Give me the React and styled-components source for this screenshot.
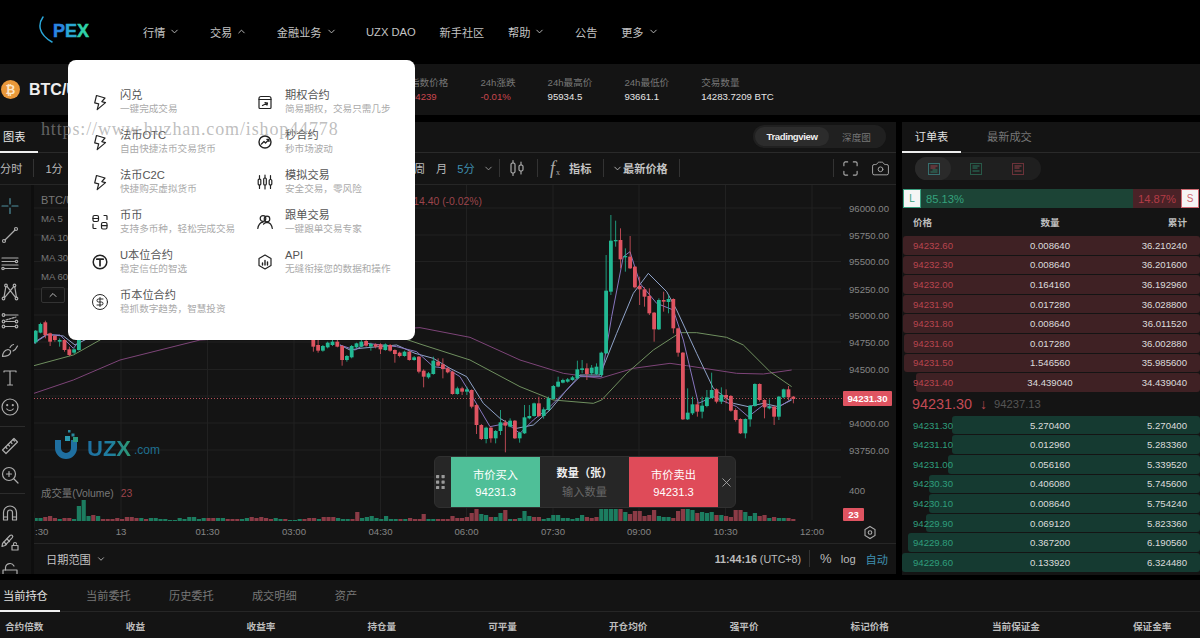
import React from "react";
import styled, { createGlobalStyle } from "styled-components";
import { ChevronDown, ChevronUp, ChevronLeft, Camera, X, CircleDollarSign } from "lucide-react";

const GlobalStyle = createGlobalStyle`
  html, body {
    margin: 0;
    padding: 0;
    background: #000;
  }
  body {
    font-family: "Liberation Sans", "Noto Sans CJK SC", sans-serif;
    color: #ccc;
  }
`;

/* chart data: values are read off the picture at 3x, so y = y0 + v / 3 */
const candleRuns = [
  {
    x0: 35.7,
    y0: 200,
    items: [
      [392, 427, 390, 432, "g"], [372, 398, 368, 400, "g"], [367, 405, 362, 415, "r"], [400, 425, 398, 438, "r"],
      [408, 420, 405, 425, "r"], [420, 425, 415, 440, "g"], [420, 450, 418, 455, "r"], [448, 465, 440, 468, "r"],
      [448, 458, 445, 462, "g"], [418, 450, 415, 452, "g"],
    ],
  },
  {
    x0: 313.3,
    y0: 330,
    items: [
      [30, 50, 25, 65, "r"], [45, 62, 30, 68, "r"], [48, 62, 45, 65, "g"], [38, 52, 35, 55, "g"], [35, 45, 30, 48, "g"],
      [35, 50, 28, 52, "r"], [48, 90, 45, 107, "r"], [78, 90, 75, 95, "g"], [48, 82, 45, 85, "g"], [40, 52, 38, 55, "g"],
      [35, 50, 30, 52, "g"], [33, 47, 30, 50, "r"], [42, 50, 38, 62, "g"], [43, 50, 40, 55, "r"], [43, 58, 40, 72, "r"],
      [43, 60, 40, 62, "g"], [45, 62, 42, 65, "r"], [60, 72, 58, 98, "r"], [68, 78, 65, 82, "r"], [65, 78, 62, 80, "g"],
      [65, 90, 62, 92, "r"], [82, 90, 78, 92, "g"], [80, 125, 78, 130, "r"], [122, 140, 118, 172, "r"], [130, 142, 126, 146, "g"],
      [92, 132, 80, 134, "g"], [95, 107, 85, 110, "r"], [103, 117, 85, 145, "r"], [115, 127, 112, 130, "r"], [125, 192, 122, 194, "r"],
      [175, 192, 170, 194, "g"], [175, 185, 170, 195, "r"], [178, 185, 170, 195, "g"], [180, 230, 178, 235, "r"], [225, 285, 222, 312, "r"],
      [285, 327, 282, 330, "r"], [293, 327, 290, 340, "g"], [293, 325, 290, 338, "r"], [303, 325, 300, 340, "g"], [277, 303, 240, 315, "g"],
      [277, 287, 270, 367, "r"], [272, 290, 265, 292, "g"], [272, 325, 270, 327, "r"], [308, 325, 305, 338, "g"], [262, 310, 225, 312, "g"],
      [258, 265, 225, 268, "g"], [220, 258, 218, 260, "g"], [220, 258, 200, 262, "r"], [238, 258, 232, 266, "g"], [205, 240, 200, 242, "g"],
      [168, 207, 165, 209, "g"], [155, 170, 140, 172, "g"], [150, 158, 146, 160, "g"], [148, 155, 144, 158, "g"], [142, 150, 138, 152, "g"],
      [118, 145, 92, 148, "g"], [115, 120, 90, 130, "g"], [115, 132, 100, 150, "r"], [113, 130, 105, 135, "g"], [110, 132, 100, 135, "g"],
    ],
  },
  {
    x0: 601.3,
    y0: 200,
    items: [
      [458, 525, 455, 530, "g"], [272, 460, 165, 462, "g"], [122, 275, 45, 285, "g"], [120, 124, 62, 140, "g"], [120, 178, 85, 205, "r"],
      [168, 172, 145, 215, "g"], [170, 205, 108, 207, "r"], [200, 262, 198, 265, "r"], [258, 268, 230, 315, "r"], [268, 290, 262, 320, "r"],
      [288, 340, 265, 345, "r"], [338, 388, 336, 425, "r"], [300, 388, 295, 390, "g"], [300, 305, 275, 335, "r"], [297, 306, 285, 340, "g"],
      [297, 385, 295, 400, "r"], [385, 458, 383, 470, "r"], [458, 658, 456, 660, "r"], [638, 658, 565, 660, "g"], [613, 640, 590, 645, "g"],
      [613, 635, 605, 650, "r"], [617, 635, 590, 655, "g"], [592, 618, 570, 622, "g"], [570, 594, 518, 595, "g"], [568, 605, 565, 610, "r"],
      [585, 605, 562, 612, "g"], [585, 593, 568, 610, "r"], [588, 632, 585, 635, "r"], [630, 660, 625, 665, "r"], [657, 700, 655, 702, "r"],
      [657, 700, 655, 715, "g"], [617, 658, 615, 680, "g"], [552, 618, 550, 620, "g"], [552, 600, 550, 605, "r"], [600, 622, 598, 655, "r"],
      [620, 625, 598, 628, "g"], [620, 650, 618, 675, "r"], [590, 650, 588, 660, "g"], [568, 592, 566, 595, "g"], [568, 592, 558, 600, "r"],
      [590, 597, 588, 610, "r"],
    ],
  },
];

const maLines = [
  {
    color: "#7d4478",
    segments: [
      [
        [0, 200, [[102, 580], [220, 540], [360, 480], [600, 420]]],
        [420, 200, [[0, 383], [150, 412], [300, 480], [430, 520], [540, 535], [640, 505], [750, 490], [800, 497], [950, 520], [1030, 522], [1115, 510]]],
      ],
    ],
  },
  {
    color: "#6f8f5f",
    segments: [
      [
        [0, 200, [[102, 497], [220, 465], [300, 420], [600, 200]]],
        [420, 200, [[-50, 415], [0, 432], [150, 480], [300, 560], [400, 600], [520, 610], [545, 600], [620, 520], [700, 450], [780, 398], [830, 398], [920, 412], [970, 435], [1050, 515], [1115, 560]]],
      ],
    ],
  },
  {
    color: "#8fa3c9",
    segments: [
      [[0, 200, [[102, 428], [140, 403], [190, 408], [225, 435], [260, 417]]]],
      [
        [300, 330, [[120, 45], [150, 60], [180, 55], [290, 45], [345, 70], [400, 85], [450, 115], [500, 140], [550, 220], [600, 265], [650, 295], [700, 285], [750, 240], [800, 180], [840, 135]]],
        [420, 200, [[540, 525], [590, 400], [640, 280], [685, 220], [740, 275], [770, 330], [830, 460], [880, 565], [940, 610], [985, 620], [1030, 610], [1075, 620], [1115, 600]]],
      ],
    ],
  },
  {
    color: "#8675bd",
    segments: [
      [[0, 200, [[102, 430], [140, 405], [180, 405], [220, 445], [240, 420]]]],
      [
        [300, 330, [[120, 45], [165, 60], [200, 40], [290, 50], [350, 65], [400, 110], [440, 115], [480, 140], [520, 205], [570, 290], [620, 280], [660, 310], [700, 270], [750, 230], [840, 140]]],
        [420, 200, [[545, 530], [575, 350], [610, 170], [630, 155], [660, 250], [710, 310], [760, 330], [790, 420], [835, 610], [880, 590], [950, 620], [985, 650], [1030, 615], [1070, 625], [1115, 597]]],
      ],
    ],
  },
];

const volumesLeft = [
  3, 3, -4, -5, -3, 2, -3, -3, 2, 15, 21, 5, -6, 5, -2, -2, -2, -3, -2, -4, -4, -3, 3, -2, 3, 3, 2, 2, 1, 1, 3, 2, 4, 4, 2, 3, -3, -3, 3, 3,
  -2, -2, -2, 2, 3, -4, -3, -4, -3, -2, 3, 2, -2, 1, 1, 2, -2, -3, -3, 2, -4, -4, -4, 3, 2, 2, -2, -9, 3, 4, 5, 3, 2, 5, 2, 2, -2, 2, -3, -2, -2,
];
const volumesRight = [
  -7, 2, 2, -2, -2, -2, -5, -3, -3, -4, -8, -12, 7, 6, -4, 4, 8, -11, 2, -2, 3, 10, 5, -4, -4, 2, 3, 6, 6, 3, 3, 2, 3, 6, -4, -3, -4, 12, 12, 12, 12,
  -12, 9, -7, -10, -10, -5, -6, -11, 5, 4, 4, -3, -10, -12, 12, 11, -8, 9, 8, 9, -6, 6, -5, -4, -11, -11, 9, 5, 8, -5, -6, 3, -4, 3, 3, -3, -2,
];

const priceLabels = [
  ["96000.00", 208], ["95750.00", 235], ["95500.00", 261.5], ["95250.00", 289], ["95000.00", 315],
  ["94750.00", 342], ["94500.00", 369.5], ["94000.00", 423], ["93750.00", 450], ["400", 490],
];
const gridY = [208, 235, 261.5, 289, 315, 342, 369.5, 396, 423, 450, 477];
const timeLabels = [
  ["13", 121], ["01:30", 207.5], ["03:00", 294], ["04:30", 380.5],
  ["06:00", 466.5], ["07:30", 553], ["09:00", 639], ["10:30", 725.5], ["12:00", 812],
];

const asks = [
  ["94232.60", "0.008640", "36.210240", 297],
  ["94232.30", "0.008640", "36.201600", 297],
  ["94232.00", "0.164160", "36.192960", 297],
  ["94231.90", "0.017280", "36.028800", 297],
  ["94231.80", "0.008640", "36.011520", 297],
  ["94231.60", "0.017280", "36.002880", 296],
  ["94231.50", "1.546560", "35.985600", 296],
  ["94231.40", "34.439040", "34.439040", 284],
];
const bids = [
  ["94231.30", "5.270400", "5.270400", 248],
  ["94231.10", "0.012960", "5.283360", 248],
  ["94231.00", "0.056160", "5.339520", 252],
  ["94230.30", "0.406080", "5.745600", 271],
  ["94230.10", "0.008640", "5.754240", 271],
  ["94229.90", "0.069120", "5.823360", 274],
  ["94229.80", "0.367200", "6.190560", 292],
  ["94229.60", "0.133920", "6.324480", 298],
];

const toPoints = (parts) =>
  parts
    .flatMap(([x0, y0, pts]) => pts.map(([x, y]) => `${x0 + x / 3},${y0 + y / 3}`))
    .join(" ");

const lineIcon = (children, box = 18) => ({ size = 18 }) => (
  <svg width={size} height={size} viewBox={`0 0 ${box} ${box}`} fill="none" stroke="currentColor" strokeWidth="1.2" strokeLinecap="round" strokeLinejoin="round">
    {children}
  </svg>
);

/* menu icons */
const BoltIcon = lineIcon(<path d="M5.500 2.500l8.500 2.500-3.200 3.600 3.700 1-8.300 7 1.500-5.700-4-1.100z" />);
const OptionIcon = lineIcon(
  <>
    <path d="M3 5.500c0-1 .6-2 2-2h8c1.400 0 2 1 2 2v9c0 .6-.4 1-1 1H4c-.6 0-1-.4-1-1z" />
    <path d="M3 6.500h12M6.500 12.500l5-2.500M9 9.600l2.500.4-.5 2.200" />
  </>
);
const SecondIcon = lineIcon(
  <>
    <circle cx="9" cy="9" r="6" strokeWidth="1.4" />
    <path d="M5.500 11l2.500-2.500 1.500 1.500L13 6.500M10.800 6.300H13v2.200" />
  </>
);
const SimIcon = lineIcon(
  <>
    <path d="M3.500 2.500V6M3.500 12v3.500M9 2v3M9 12v4M14.500 2.500v4M14.500 12v3.500" />
    <rect x="2.200" y="6" width="2.600" height="6" rx="1" />
    <rect x="7.700" y="5" width="2.600" height="7" rx="1" />
    <rect x="13.200" y="6.500" width="2.600" height="5.500" rx="1" />
  </>
);
const SpotIcon = lineIcon(
  <>
    <rect x="2" y="2.500" width="5.500" height="6" rx="1.500" />
    <path d="M2 5.500h5.500M16 6.500V3.500a1 1 0 0 0-1-1h-2M2 11v3.500a1 1 0 0 0 1 1h2" />
    <rect x="10.500" y="9.500" width="5.500" height="6.500" rx="1.500" />
    <path d="M10.500 12.700h5.500" />
  </>
);
const CopyIcon = lineIcon(
  <>
    <circle cx="7" cy="5.500" r="2.800" />
    <circle cx="11" cy="6" r="2.800" />
    <path d="M1.800 15.500c.6-3.500 2.400-6 5.200-6.300M16.300 15.500c-.5-3.300-2.200-6-5.300-6.200-1.600.1-2.700.8-3.500 1.900" />
  </>
);
const CoinTIcon = lineIcon(
  <>
    <circle cx="9" cy="9" r="6.800" strokeWidth="1.5" />
    <path d="M5.800 6.200h6.400M9 6.200v6.500" strokeWidth="1.700" />
  </>
);
const ApiIcon = lineIcon(
  <>
    <path d="M9 2l6 3.400v7.200L9 16l-6-3.400V5.400z" />
    <path d="M6.500 12V10M9 12V7.500M11.500 12V9" strokeWidth="1.400" />
  </>
);

/* toolbar icons */
const CrossTool = lineIcon(<path d="M9 1.500v5.500M9 11v5.500M1 9h6M11 9h6" />);
const LineTool = lineIcon(
  <>
    <circle cx="3" cy="15" r="1.500" />
    <circle cx="15" cy="3" r="1.500" />
    <path d="M4 14L14 4" />
  </>
);
const LinesTool = lineIcon(
  <>
    <path d="M1 3h16M1 6.500h13M1 10h16M3.500 13.500H17" />
    <circle cx="15.500" cy="6.500" r="1.200" />
    <circle cx="2" cy="13.500" r="1.200" />
  </>
);
const WebTool = lineIcon(
  <>
    <circle cx="5" cy="2.500" r="1.300" />
    <circle cx="13.500" cy="2.500" r="1.300" />
    <circle cx="2.500" cy="15.500" r="1.300" />
    <circle cx="15.500" cy="15.500" r="1.300" />
    <path d="M3 14.300L4.800 3.800M6 3.300l8.700 11.300M12.800 3.500L3.600 14.700M13.800 3.800l1.600 10.400" />
  </>
);
const ForkTool = lineIcon(
  <>
    <circle cx="2.500" cy="3" r="1.300" />
    <circle cx="2.500" cy="9.500" r="1.300" />
    <circle cx="2.500" cy="14.500" r="1.300" />
    <circle cx="15.500" cy="9.500" r="1.300" />
    <circle cx="15.500" cy="14.500" r="1.300" />
    <path d="M4 3h13M4 9.500h10M4 14.500h10" />
    <path d="M5 8l10-3" strokeDasharray="2 1.200" />
  </>
);
const BrushTool = lineIcon(
  <>
    <path d="M1.500 15.500c.3-3 2-6.500 5.500-7 2 .2 3 1.500 2.500 3.300-.8 2.600-4.200 3.700-8 3.700z" />
    <path d="M9 6.500c.8-1.700 2-2.800 3.500-3M12 10c1.800-.8 3.500-2.800 4.500-5" />
  </>
);
const TextTool = lineIcon(<path d="M3 3V2h12v1M9 2v14M6.500 16h5" />);
const SmileTool = lineIcon(
  <>
    <circle cx="9" cy="9" r="8" />
    <circle cx="6.200" cy="7.200" r=".5" />
    <circle cx="11.800" cy="7.200" r=".5" />
    <path d="M5.800 11c1.600 2 4.800 2 6.400 0" />
  </>
);
const RulerTool = lineIcon(
  <>
    <path d="M1.500 13l11.500-11.500 3.500 3.500L5 16.500z" />
    <path d="M4.500 10l1.500 1.500M7 7.500l1.500 1.500M9.500 5l1.500 1.500M12 2.500l1.500 1.500" />
  </>
);
const ZoomTool = lineIcon(
  <>
    <circle cx="8" cy="8" r="6.500" />
    <path d="M13 13l4 4M8 5.500v5M5.500 8h5" />
  </>
);
const MagnetTool = lineIcon(
  <>
    <path d="M2.500 16V8.500a6.500 6.500 0 0 1 13 0V16h-4V8.500a2.500 2.500 0 0 0-5 0V16z" />
    <path d="M2.500 13h4M11.500 13h4" />
  </>
);
const PencilLockTool = lineIcon(
  <>
    <path d="M1.500 10.500L9 2.500c.8-.7 1.700-.7 2.300 0 .6.600.6 1.500 0 2.200L4 12.500l-3 1z" />
    <path d="M3 9l2.500 2.500M6 6l2.500 2.500" />
    <rect x="11" y="12.500" width="6" height="4.500" />
    <path d="M12.500 12.500v-1.500a1.500 1.500 0 0 1 3 0" />
  </>
);
const LockTool = lineIcon(
  <>
    <rect x="2" y="8" width="14" height="9" />
    <path d="M4.500 8V5.500a4.500 4.500 0 0 1 8.500-1.500" />
  </>
);
const CandleTool = lineIcon(
  <>
    <rect x="3" y="4" width="4" height="10" rx="1.500" />
    <path d="M5 1.500V4M5 14v2.500M13 3v3M13 12v3" />
    <rect x="11" y="6" width="4" height="6" rx="1.500" />
  </>
);
const FullTool = lineIcon(<path d="M2 6V3.500C2 2.700 2.700 2 3.500 2H6M12 2h2.500c.8 0 1.500.7 1.500 1.500V6M16 12v2.500c0 .8-.7 1.500-1.500 1.500H12M6 16H3.500C2.700 16 2 15.300 2 14.500V12" />);

const GripDots = () => (
  <svg width="9" height="14" viewBox="0 0 9 14" fill="#9a9a9a">
    {[0, 5.500, 11].flatMap((y) =>
      [0, 5.500].map((x) => <rect key={`${x}-${y}`} x={x} y={y} width="3.200" height="3.200" rx=".6" />)
    )}
  </svg>
);

const BookIcon = ({ $red, $green }) => (
  <svg width="12" height="12" viewBox="0 0 12 12" fill="none" strokeWidth="1" opacity=".72">
    <rect x=".5" y=".5" width="11" height="11" stroke={$green && $red ? "#3d8a8a" : $green ? "#2c7058" : "#8a3a44"} />
    {$red && <path d="M2.500 3h7M2.500 5h5" stroke="#c0505a" />}
    {$green && <path d={$red ? "M4.500 7h5M2.500 9h7" : "M2.500 3h7M2.500 5h5M2.500 8h7"} stroke="#2f9a78" />}
    {!$green && <path d="M2.500 8h7" stroke="#c0505a" />}
  </svg>
);

const navItems = [
  { label: "行情", chevron: "down" },
  { label: "交易", chevron: "up" },
  { label: "金融业务", chevron: "down" },
  { label: "UZX DAO" },
  { label: "新手社区" },
  { label: "帮助", chevron: "down" },
  { label: "公告" },
  { label: "更多", chevron: "down" },
];

const menuItems = [
  { Icon: BoltIcon, title: "闪兑", sub: "一键完成交易" },
  { Icon: OptionIcon, title: "期权合约", sub: "简易期权，交易只需几步" },
  { Icon: BoltIcon, title: "法币OTC", sub: "自由快捷法币交易货币" },
  { Icon: SecondIcon, title: "秒合约", sub: "秒市场波动" },
  { Icon: BoltIcon, title: "法币C2C", sub: "快捷购买虚拟货币" },
  { Icon: SimIcon, title: "模拟交易", sub: "安全交易，零风险" },
  { Icon: SpotIcon, title: "币币", sub: "支持多币种，轻松完成交易" },
  { Icon: CopyIcon, title: "跟单交易", sub: "一键跟单交易专家" },
  { Icon: CoinTIcon, title: "U本位合约", sub: "稳定信任的智选" },
  { Icon: ApiIcon, title: "API", sub: "无缝衔接您的数据和操作" },
  { Icon: CircleDollarSign, title: "币本位合约", sub: "稳抓数字趋势，智慧投资" },
];

const metrics = [
  { label: "指数价格", value: "94239", red: true },
  { label: "24h涨跌", value: "-0.01%", red: true },
  { label: "24h最高价", value: "95934.5" },
  { label: "24h最低价", value: "93661.1" },
  { label: "交易数量", value: "14283.7209 BTC" },
];

const toolGroups = [
  [CrossTool, LineTool, LinesTool, WebTool, ForkTool, BrushTool, TextTool, SmileTool],
  [RulerTool, ZoomTool],
  [MagnetTool, PencilLockTool, LockTool],
];

const positionColumns = ["合约倍数", "收益", "收益率", "持仓量", "可平量", "开仓均价", "强平价", "标记价格", "当前保证金", "保证金率"];

const CandleChart = () => (
  <ChartSvg viewBox="34 185 862 358" width="862" height="358">
    {gridY.map((y) => (
      <line key={y} x1="34" x2="841" y1={y} y2={y} stroke="#212121" />
    ))}
    {timeLabels.map(([, x]) => (
      <line key={x} x1={x} x2={x} y1="185" y2="520" stroke="#212121" />
    ))}
    <line x1="34" x2="843" y1="398.500" y2="398.500" stroke="#b8505a" strokeDasharray="1 2" />
    {maLines.flatMap((ma) =>
      ma.segments.map((parts, i) => (
        <polyline key={ma.color + i} points={toPoints(parts)} fill="none" stroke={ma.color} strokeWidth="1" strokeLinejoin="round" />
      ))
    )}
    {candleRuns.flatMap((run) =>
      run.items.map(([top, bottom, high, low, tone], i) => {
        const x = run.x0 + i * 4.8;
        const fill = tone === "g" ? "#22b893" : "#df5461";
        return (
          <g key={`${run.x0}-${i}`} fill={fill}>
            <rect x={x - 0.4} width="0.8" y={run.y0 + high / 3} height={(low - high) / 3} />
            <rect x={x - 1.900} width="3.800" y={run.y0 + top / 3} height={Math.max((bottom - top) / 3, 1)} />
          </g>
        );
      })
    )}
    {[...volumesLeft.map((v, i) => [v, 35.7 + i * 4.8]), ...volumesRight.map((v, i) => [v, 423.7 + i * 4.8])].map(([v, x]) => (
      <rect key={x} x={x - 2.100} width="4.200" y={521 - Math.abs(v)} height={Math.abs(v)} fill={v > 0 ? "#1c7d60" : "#8b3b46"} />
    ))}
    {priceLabels.map(([text, y]) => (
      <AxisText key={text} x="849" y={y + 3.500}>{text}</AxisText>
    ))}
    <AxisText x="35" y="534.500">:30</AxisText>
    {timeLabels.map(([text, x]) => (
      <AxisText key={x} x={x} y="534.500" textAnchor="middle">{text}</AxisText>
    ))}
    <rect x="843" y="391" width="49" height="15" fill="#df5461" rx="1" />
    <TagText x="867.500" y="402" textAnchor="middle">94231.30</TagText>
    <rect x="843" y="508" width="21" height="13" fill="#df5461" rx="1" />
    <TagText x="853.500" y="518" textAnchor="middle">23</TagText>
    <g fill="none" stroke="#aaa" strokeWidth="1.100">
      <path d="M870 526.500l5 3v6l-5 3-5-3v-6z" />
      <circle cx="870" cy="532.500" r="1.800" />
    </g>
  </ChartSvg>
);

const UzxMark = () => (
  <svg width="27" height="32" viewBox="0 0 27 32">
    <path d="M2 11v8a11 11 0 0 0 22 0v-8h-6v8a5 5 0 0 1-10 0v-8z" fill="#1f6fa0" />
    <rect x="15" y="1" width="2.500" height="2.500" fill="#2a8aa0" />
    <rect x="18.500" y="4.500" width="3" height="3" fill="#2a8aa0" />
    <rect x="12" y="7" width="5" height="5" fill="#2a9ab0" />
    <rect x="20" y="8" width="5" height="5" fill="#2a9a80" />
  </svg>
);

const OrderRow = ({ row, tone }) => (
  <Row>
    <Depth $tone={tone} style={{ width: row[3] }} />
    <Price $tone={tone}>{row[0]}</Price>
    <Qty>{row[1]}</Qty>
    <Total>{row[2]}</Total>
  </Row>
);

export default function App() {
  return (
    <Page>
      <GlobalStyle />
      <Header>
        <Logo>
          <svg width="16" height="28" viewBox="0 0 16 28" fill="none">
            <path d="M5 1C0 8 0 18 14 26" stroke="#2aa6d8" strokeWidth="1.500" strokeLinecap="round" />
          </svg>
          <LogoText>
            <LogoLetter $color="#2a86e0">P</LogoLetter>
            <LogoLetter $color="#2aa8d4">E</LogoLetter>
            <LogoLetter $color="#2fd0a8">X</LogoLetter>
          </LogoText>
        </Logo>
        <Nav>
          {navItems.map((item) => (
            <NavItem key={item.label} $chevron={!!item.chevron}>
              {item.label}
              {item.chevron === "down" && <ChevronDown size={11} />}
              {item.chevron === "up" && <ChevronUp size={11} />}
            </NavItem>
          ))}
        </Nav>
      </Header>

      <Ticker>
        <Pair>
          <Coin>₿</Coin>
          <PairName>BTC/USDT</PairName>
        </Pair>
        <Metrics>
          {metrics.map((m) => (
            <Metric key={m.label}>
              <MetricLabel>{m.label}</MetricLabel>
              <MetricValue $red={m.red}>{m.value}</MetricValue>
            </Metric>
          ))}
        </Metrics>
      </Ticker>

      <Main>
        <ChartPanel>
          <TabBar>
            <ChartTab>图表</ChartTab>
            <ViewSwitch>
              <ViewOption $active>Tradingview</ViewOption>
              <ViewOption>深度图</ViewOption>
            </ViewSwitch>
          </TabBar>
          <Toolbar>
            <Intervals>
              <ToolLabel>分时</ToolLabel>
              <Divider />
              <ToolLabel>1分</ToolLabel>
            </Intervals>
            <ToolSlot><ToolLabel>周</ToolLabel></ToolSlot>
            <ToolSlot $ml={10.8}><ToolLabel>月</ToolLabel></ToolSlot>
            <ToolSlot $ml={10}><ToolLabel $active>5分</ToolLabel></ToolSlot>
            <ToolSlot $ml={8.4}><ChevronDown size={11} color="#999" /></ToolSlot>
            <ToolSlot $ml={5}><Divider /></ToolSlot>
            <ToolSlot $ml={8}><CandleTool size={18} /></ToolSlot>
            <ToolSlot $ml={11}><Divider /></ToolSlot>
            <ToolSlot $ml={12}><FxMark>f<sub>x</sub></FxMark></ToolSlot>
            <ToolSlot $ml={7}><ToolLabel $strong>指标</ToolLabel></ToolSlot>
            <ToolSlot $ml={11.6}><Divider /></ToolSlot>
            <ToolSlot $ml={7.5}><ChevronDown size={11} color="#bbb" /></ToolSlot>
            <ToolSlot $ml={0.5}><ToolLabel $strong>最新价格</ToolLabel></ToolSlot>
            <ToolSlot $ml={11}><Divider /></ToolSlot>
            <ToolSpacer />
            <Divider />
            <ToolSlot $ml={8}><FullTool size={17} /></ToolSlot>
            <ToolSlot $ml={12.5}><Camera size={19} strokeWidth={1.200} /></ToolSlot>
          </Toolbar>
          <ChartBody>
            <ToolRail>
              {toolGroups.map((group, i) => (
                <ToolGroup key={i}>
                  {group.map((Tool, j) => (
                    <RailItem key={j} $accent={i === 0 && j === 0}>
                      <Tool size={18} />
                    </RailItem>
                  ))}
                </ToolGroup>
              ))}
            </ToolRail>
            <ChartColumn>
              <Canvas>
                <CandleChart />
                <Legend>
                  <LegendTitle>
                    <span>BTC/USDT</span>
                    <LegendChange>14.40 (-0.02%)</LegendChange>
                  </LegendTitle>
                  <LegendRow>MA 5</LegendRow>
                  <LegendRow>MA 10</LegendRow>
                  <LegendRow>MA 30</LegendRow>
                  <LegendRow>MA 60</LegendRow>
                  <LegendToggle><ChevronUp size={12} /></LegendToggle>
                </Legend>
                <Watermark>
                  <UzxMark />
                  <WatermarkName>UZX</WatermarkName>
                  <WatermarkDomain>.com</WatermarkDomain>
                </Watermark>
                <VolumeLabel>成交量(Volume)<VolumeValue>23</VolumeValue></VolumeLabel>
                <RailHandle><ChevronLeft size={9} /></RailHandle>
                <QuickTrade>
                  <TradeGrip><GripDots /></TradeGrip>
                  <TradeButton $tone="buy">市价买入<b>94231.3</b></TradeButton>
                  <TradeQty>
                    <strong>数量（张）</strong>
                    <span>输入数量</span>
                  </TradeQty>
                  <TradeButton $tone="sell">市价卖出<b>94231.3</b></TradeButton>
                  <TradeClose><X size={15} strokeWidth={1.400} /></TradeClose>
                </QuickTrade>
              </Canvas>
              <ChartFooter>
                <DateRange>日期范围<ChevronDown size={10} /></DateRange>
                <FooterRight>
                  <Clock><b>11:44:16</b> (UTC+8)</Clock>
                  <FooterDivider />
                  <FooterOption $large>%</FooterOption>
                  <FooterOption>log</FooterOption>
                  <FooterOption $active>自动</FooterOption>
                </FooterRight>
              </ChartFooter>
            </ChartColumn>
          </ChartBody>
        </ChartPanel>

        <BookPanel>
          <BookTabs>
            <BookTab $active>订单表</BookTab>
            <BookTab>最新成交</BookTab>
          </BookTabs>
          <BookModes>
            <BookMode $active><BookIcon $red $green /></BookMode>
            <BookMode><BookIcon $green /></BookMode>
            <BookMode><BookIcon $red /></BookMode>
          </BookModes>
          <Ratio>
            <RatioBadge $tone="long">L</RatioBadge>
            <RatioLong>85.13%</RatioLong>
            <RatioShort>14.87%</RatioShort>
            <RatioBadge $tone="short">S</RatioBadge>
          </Ratio>
          <BookHead>
            <span>价格</span>
            <span>数量</span>
            <span>累计</span>
          </BookHead>
          <Rows>
            {asks.map((row) => <OrderRow key={row[0]} row={row} tone="ask" />)}
          </Rows>
          <MidPrice>
            <LastPrice>94231.30</LastPrice>
            <DownArrow>↓</DownArrow>
            <IndexPrice>94237.13</IndexPrice>
          </MidPrice>
          <Rows>
            {bids.map((row) => <OrderRow key={row[0]} row={row} tone="bid" />)}
          </Rows>
        </BookPanel>
      </Main>

      <Positions>
        <PositionTabs>
          <PositionTab $active>当前持仓</PositionTab>
          <PositionTab>当前委托</PositionTab>
          <PositionTab>历史委托</PositionTab>
          <PositionTab>成交明细</PositionTab>
          <PositionTab>资产</PositionTab>
        </PositionTabs>
        <PositionHead>
          {positionColumns.map((c) => <span key={c}>{c}</span>)}
        </PositionHead>
      </Positions>

      <Menu>
        {menuItems.map(({ Icon, title, sub }) => (
          <MenuItem key={title}>
            <MenuIcon><Icon size={18} strokeWidth={1.300} /></MenuIcon>
            <div>
              <MenuTitle>{title}</MenuTitle>
              <MenuSub>{sub}</MenuSub>
            </div>
          </MenuItem>
        ))}
      </Menu>

      <SiteMark>https://www.huzhan.com/ishop44778</SiteMark>
    </Page>
  );
}

const Page = styled.div`
  position: relative;
  width: 1200px;
  height: 638px;
  overflow: hidden;
  background: #000;
  display: flex;
  flex-direction: column;
`;

const Header = styled.header`
  flex: none;
  height: 64px;
  padding: 0 0 1px 38px;
  box-sizing: border-box;
  display: flex;
  align-items: center;
`;

const Logo = styled.div`
  width: 105px;
  display: flex;
  align-items: center;
  margin-top: -2px;
  svg {
    margin-right: -1px;
    margin-top: -2px;
  }
`;

const LogoText = styled.span`
  font-size: 18px;
  font-weight: 700;
  margin-top: 2px;
`;

const LogoLetter = styled.span`
  color: ${(p) => p.$color};
  -webkit-text-stroke: 0.5px ${(p) => p.$color};
`;

const Nav = styled.nav`
  display: flex;
  align-items: center;
  gap: 23.800px;
`;

const NavItem = styled.span`
  display: flex;
  align-items: center;
  gap: 4px;
  font-size: 11.200px;
  color: #c4c4c4;
  margin-right: ${(p) => (p.$chevron ? "5.700px" : "0")};
`;

const Ticker = styled.section`
  flex: none;
  height: 51px;
  background: #141414;
  display: flex;
  align-items: center;
`;

const Pair = styled.div`
  width: 410px;
  display: flex;
  align-items: center;
  gap: 8px;
  padding-left: 1px;
  box-sizing: border-box;
`;

const Coin = styled.span`
  width: 19px;
  height: 19px;
  border-radius: 50%;
  background: #e9983a;
  color: #fbe6c8;
  font-size: 12px;
  font-weight: 700;
  display: flex;
  align-items: center;
  justify-content: center;
`;

const PairName = styled.span`
  font-size: 16px;
  font-weight: 700;
  color: #eee;
  margin-left: 1px;
`;

const Metrics = styled.div`
  display: flex;
  gap: 32px;
`;

const Metric = styled.div`
  display: flex;
  flex-direction: column;
  gap: 3px;
`;

const MetricLabel = styled.span`
  font-size: 9.600px;
  color: #777;
  line-height: 11px;
`;

const MetricValue = styled.span`
  font-size: 9.600px;
  line-height: 11px;
  color: ${(p) => (p.$red ? "#c9474f" : "#e6e6e6")};
`;

const Main = styled.main`
  flex: none;
  margin-top: 7px;
  height: 452px;
  display: flex;
  gap: 6px;
`;

const ChartPanel = styled.section`
  width: 896px;
  background: #141414;
  display: flex;
  flex-direction: column;
`;

const TabBar = styled.div`
  flex: none;
  height: 31px;
  box-sizing: border-box;
  border-bottom: 1px solid #2a2a2a;
  display: flex;
  justify-content: space-between;
  padding-right: 10px;
`;

const ChartTab = styled.div`
  width: 38px;
  box-sizing: border-box;
  padding: 8px 0 0 3px;
  font-size: 11.200px;
  line-height: 14px;
  color: #e8e8e8;
  border-bottom: 2px solid #eee;
  height: 31px;
`;

const ViewSwitch = styled.div`
  margin-top: 3px;
  width: 133px;
  height: 23px;
  box-sizing: border-box;
  padding: 2px;
  background: #202020;
  border-radius: 12px;
  display: flex;
  align-items: center;
`;

const ViewOption = styled.span`
  flex: ${(p) => (p.$active ? "0 0 74px" : "1")};
  height: 19px;
  border-radius: 10px;
  background: ${(p) => (p.$active ? "#2c2c2c" : "transparent")};
  color: ${(p) => (p.$active ? "#eee" : "#777")};
  font-size: 9.600px;
  font-weight: ${(p) => (p.$active ? 700 : 400)};
  letter-spacing: ${(p) => (p.$active ? "-0.400px" : "0")};
  display: flex;
  align-items: center;
  justify-content: center;
`;

const Toolbar = styled.div`
  flex: none;
  height: 32px;
  box-sizing: border-box;
  border-bottom: 1px solid #262626;
  padding: 0 6px 1px 0;
  display: flex;
  align-items: center;
  color: #aaa;
`;

const Intervals = styled.div`
  width: 414px;
  flex: none;
  display: flex;
  align-items: center;
  gap: 11px;
`;

const ToolSlot = styled.span`
  flex: none;
  display: flex;
  align-items: center;
  margin-left: ${(p) => p.$ml || 0}px;
`;

const ToolLabel = styled.span`
  font-size: 11.200px;
  color: ${(p) => (p.$active ? "#3f8fb0" : p.$strong ? "#c4c4c4" : "#bbb")};
  font-weight: ${(p) => (p.$strong ? 700 : 400)};
`;

const Divider = styled.span`
  width: 1px;
  height: 18px;
  background: #333;
`;

const ToolSpacer = styled.span`
  flex: 1;
`;

const FxMark = styled.span`
  width: 12px;
  font-family: "Liberation Serif", serif;
  font-style: italic;
  font-size: 18px;
  color: #aaa;
  line-height: 1;
  white-space: nowrap;
  sub {
    font-size: 8px;
    font-style: normal;
    vertical-align: -1px;
    margin-left: 1px;
  }
`;

const ChartBody = styled.div`
  flex: 1;
  min-height: 0;
  display: flex;
`;

const ToolRail = styled.aside`
  width: 34px;
  box-sizing: border-box;
  border-right: 3px solid #0e0e0e;
  padding-top: 7px;
  overflow: hidden;
  color: #adadad;
`;

const ToolGroup = styled.div`
  width: 25px;
  padding-bottom: 4px;
  margin-bottom: 5px;
  border-bottom: 1px solid #2c2c2c;
  &:last-child {
    border-bottom: none;
  }
`;

const RailItem = styled.div`
  width: 20px;
  height: 28.700px;
  display: flex;
  align-items: center;
  justify-content: center;
  color: ${(p) => (p.$accent ? "#4f8f9f" : "#adadad")};
`;

const ChartColumn = styled.div`
  flex: 1;
  min-width: 0;
  display: flex;
  flex-direction: column;
`;

const Canvas = styled.div`
  position: relative;
  flex: none;
  height: 358px;
  overflow: hidden;
  border-bottom: 1px solid #262626;
  margin-bottom: -1px;
`;

const ChartSvg = styled.svg`
  display: block;
`;

const AxisText = styled.text`
  font-size: 9.600px;
  fill: #858585;
`;

const TagText = styled.text`
  font-size: 9.600px;
  font-weight: 700;
  fill: #fff;
`;

const Legend = styled.div`
  position: absolute;
  left: 7px;
  top: 5px;
  font-size: 9.600px;
  color: #777;
`;

const LegendTitle = styled.div`
  width: 441px;
  height: 19px;
  display: flex;
  justify-content: space-between;
  align-items: center;
  font-size: 11px;
`;

const LegendChange = styled.span`
  margin-top: 3px;
  color: #9c444c;
  font-size: 10.400px;
`;

const LegendRow = styled.div`
  height: 19.300px;
  display: flex;
  align-items: center;
`;

const LegendToggle = styled.div`
  width: 24px;
  height: 16px;
  margin-top: 1px;
  border: 1px solid #333;
  border-radius: 2px;
  box-sizing: border-box;
  display: flex;
  align-items: center;
  justify-content: center;
  color: #bbb;
`;

const Watermark = styled.div`
  position: absolute;
  left: 19px;
  top: 244px;
  display: flex;
  align-items: flex-end;
`;

const WatermarkName = styled.span`
  margin-left: 7px;
  font-size: 22px;
  line-height: 24px;
  font-weight: 700;
  background: linear-gradient(90deg, #1f6fa0, #1f7fa0 55%, #2f9a70);
  -webkit-background-clip: text;
  background-clip: text;
  color: transparent;
`;

const WatermarkDomain = styled.span`
  margin-left: 3px;
  font-size: 12px;
  line-height: 21px;
  color: #1f6f90;
`;

const VolumeLabel = styled.div`
  position: absolute;
  left: 7px;
  top: 300px;
  font-size: 10.400px;
  color: #777;
`;

const VolumeValue = styled.span`
  margin-left: 7px;
  color: #9c444c;
`;

const RailHandle = styled.div`
  position: absolute;
  left: -7px;
  top: 325px;
  width: 8px;
  height: 20px;
  border-radius: 0 4px 4px 0;
  background: #1b1b1b;
  color: #999;
  display: flex;
  align-items: center;
  justify-content: center;
`;

const QuickTrade = styled.div`
  position: absolute;
  left: 400px;
  top: 271px;
  width: 302px;
  height: 52px;
  box-sizing: border-box;
  border-radius: 6px;
  background: #262626;
  border: 1px solid #303030;
  display: flex;
  align-items: stretch;
  overflow: hidden;
`;

const TradeGrip = styled.span`
  width: 16px;
  display: flex;
  align-items: center;
  padding-left: 1px;
  box-sizing: border-box;
`;

const TradeButton = styled.div`
  width: 89px;
  background: ${(p) => (p.$tone === "buy" ? "#4fbf98" : "#df4b59")};
  color: #fff;
  font-size: 11.200px;
  display: flex;
  flex-direction: column;
  align-items: center;
  justify-content: center;
  gap: 4px;
  b {
    font-weight: 400;
    font-size: 11.200px;
  }
`;

const TradeQty = styled.div`
  width: 89px;
  display: flex;
  flex-direction: column;
  align-items: center;
  justify-content: center;
  gap: 3px;
  margin-top: -1px;
  font-size: 11.200px;
  strong {
    color: #eee;
  }
  span {
    color: #666;
    font-size: 11.200px;
  }
`;

const TradeClose = styled.span`
  flex: 1;
  display: flex;
  align-items: center;
  justify-content: center;
  color: #aaa;
`;

const ChartFooter = styled.div`
  flex: 1;
  display: flex;
  align-items: center;
  justify-content: space-between;
  padding: 0 8px 0 12px;
`;

const DateRange = styled.span`
  display: flex;
  align-items: center;
  gap: 5px;
  font-size: 11.200px;
  color: #c4c4c4;
`;

const FooterRight = styled.div`
  display: flex;
  align-items: center;
  gap: 10px;
  font-size: 11px;
`;

const Clock = styled.span`
  color: #bbb;
  font-size: 10.700px;
`;

const FooterDivider = styled.span`
  width: 1px;
  height: 17px;
  background: #333;
  margin-left: -2px;
`;

const FooterOption = styled.span`
  color: ${(p) => (p.$active ? "#3f8fb0" : "#bbb")};
  font-size: ${(p) => (p.$large ? "13px" : "11.200px")};
  margin-right: ${(p) => (p.$large ? "-1px" : "0")};
`;

const BookPanel = styled.section`
  width: 298px;
  background: #141414;
  height: 453px;
`;

const BookTabs = styled.div`
  height: 31px;
  box-sizing: border-box;
  border-bottom: 1px solid #2a2a2a;
  display: flex;
`;

const BookTab = styled.div`
  width: ${(p) => (p.$active ? "59px" : "auto")};
  height: 31px;
  box-sizing: border-box;
  padding-top: 8px;
  line-height: 14px;
  margin-left: ${(p) => (p.$active ? "0" : "26px")};
  font-size: 11.200px;
  text-align: ${(p) => (p.$active ? "center" : "left")};
  color: ${(p) => (p.$active ? "#e0e0e0" : "#777")};
  border-bottom: ${(p) => (p.$active ? "2px solid #eee" : "none")};
`;

const BookModes = styled.div`
  margin: 4px 0 0 13px;
  width: 126px;
  height: 23px;
  border-radius: 12px;
  background: #1f1f1f;
  display: flex;
`;

const BookMode = styled.span`
  width: 37px;
  margin-right: 6px;
  padding-left: 2px;
  box-sizing: border-box;
  border-radius: 12px;
  background: ${(p) => (p.$active ? "#2a2a2a" : "transparent")};
  display: flex;
  align-items: center;
  justify-content: center;
`;

const Ratio = styled.div`
  margin: 9px 1px 0;
  height: 19px;
  display: flex;
  align-items: stretch;
  font-size: 11.200px;
`;

const RatioBadge = styled.span`
  width: 18px;
  background: #f5f5f5;
  box-sizing: border-box;
  border: 1px solid ${(p) => (p.$tone === "long" ? "#3aa080" : "#d06a72")};
  color: ${(p) => (p.$tone === "long" ? "#3aa080" : "#d06a72")};
  font-size: 10px;
  display: flex;
  align-items: center;
  justify-content: center;
`;

const RatioLong = styled.span`
  flex: 1;
  background: #1c4436;
  color: #35a27d;
  padding-left: 5px;
  display: flex;
  align-items: center;
`;

const RatioShort = styled.span`
  width: 48px;
  box-sizing: border-box;
  background: #4a2227;
  color: #b33c46;
  padding-right: 5px;
  display: flex;
  align-items: center;
  justify-content: flex-end;
`;

const BookHead = styled.div`
  height: 28px;
  display: grid;
  grid-template-columns: repeat(3, 1fr);
  align-items: center;
  padding: 0 13px 0 11px;
  font-size: 9.600px;
  font-weight: 700;
  color: #bdbdbd;
  span:nth-child(2) {
    text-align: center;
  }
  span:nth-child(3) {
    text-align: right;
  }
`;

const Rows = styled.div`
  display: flex;
  flex-direction: column;
  gap: 1px;
`;

const Row = styled.div`
  position: relative;
  height: 18.600px;
  display: grid;
  grid-template-columns: repeat(3, 1fr);
  align-items: center;
  padding: 0 13px 0 11px;
  font-size: 9.600px;
  color: #dcdcdc;
`;

const Depth = styled.span`
  position: absolute;
  top: 0;
  bottom: 0;
  right: 0;
  border-radius: 3px;
  background: ${(p) => (p.$tone === "ask" ? "#3f2124" : "#153a31")};
`;

const Price = styled.span`
  position: relative;
  color: ${(p) => (p.$tone === "ask" ? "#b8454f" : "#2f9e7c")};
`;

const Qty = styled.span`
  position: relative;
  text-align: center;
`;

const Total = styled.span`
  position: relative;
  text-align: right;
`;

const MidPrice = styled.div`
  height: 24px;
  padding-left: 10px;
  display: flex;
  align-items: center;
`;

const LastPrice = styled.span`
  font-size: 14.400px;
  color: #c24a54;
`;

const DownArrow = styled.span`
  margin: 1px 0 0 8px;
  font-size: 14px;
  color: #b8454f;
`;

const IndexPrice = styled.span`
  margin-left: 7px;
  font-size: 11.200px;
  color: #555;
`;

const Positions = styled.section`
  margin-top: 6px;
  flex: 1 1 0;
  min-height: 0;
  background: #141414;
`;

const PositionTabs = styled.div`
  height: 32px;
  box-sizing: border-box;
  border-bottom: 1px solid #262626;
  display: flex;
`;

const PositionTab = styled.div`
  width: ${(p) => (p.$active ? "60px" : "auto")};
  height: 32px;
  box-sizing: border-box;
  padding: 9px 0 0 3px;
  line-height: 14px;
  margin-right: ${(p) => (p.$active ? "23px" : "35.200px")};
  font-size: 11.200px;
  color: ${(p) => (p.$active ? "#e0e0e0" : "#777")};
  border-bottom: ${(p) => (p.$active ? "2px solid #eee" : "none")};
`;

const PositionHead = styled.div`
  height: 28px;
  padding-left: 5px;
  display: grid;
  grid-template-columns: repeat(7, 120.800px) 141.400px 141px 1fr;
  align-items: center;
  font-size: 9.600px;
  font-weight: 700;
  color: #bdbdbd;
`;

const Menu = styled.div`
  position: absolute;
  left: 68px;
  top: 60px;
  width: 347px;
  height: 280px;
  box-sizing: border-box;
  padding: 21.500px 0 0 23px;
  background: #fff;
  border-radius: 8px;
  display: grid;
  grid-template-columns: 165px 1fr;
  grid-auto-rows: 40px;
`;

const MenuItem = styled.div`
  display: flex;
  align-items: center;
  gap: 11px;
`;

const MenuIcon = styled.span`
  width: 18px;
  height: 18px;
  color: #222;
`;

const MenuTitle = styled.div`
  font-size: 11.200px;
  line-height: 13px;
  color: #555;
`;

const MenuSub = styled.div`
  font-size: 9.600px;
  line-height: 13px;
  color: #aaa;
`;

const SiteMark = styled.div`
  position: absolute;
  left: 41px;
  top: 119px;
  font-family: "Liberation Serif", serif;
  font-size: 18px;
  letter-spacing: 0.870px;
  color: rgba(150, 150, 150, 0.62);
  white-space: nowrap;
`;
